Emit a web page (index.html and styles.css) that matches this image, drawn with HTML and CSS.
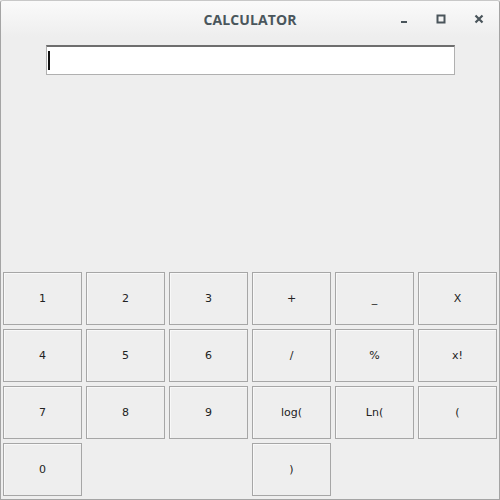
FILE: index.html
```html
<!DOCTYPE html>
<html>
<head>
<meta charset="utf-8">
<link rel="stylesheet" href="styles.css">
</head>
<body>
<div class="window">
  <div class="titlebar">
    <span class="title">CALCULATOR</span>
    <div class="controls">
      <svg class="ctl min" width="12" height="12" viewBox="0 0 12 12"><rect x="3" y="8" width="6" height="2" fill="#4a555b"/></svg>
      <svg class="ctl max" width="12" height="12" viewBox="0 0 12 12"><rect x="2.5" y="2.5" width="7" height="7" fill="none" stroke="#4a555b" stroke-width="2"/></svg>
      <svg class="ctl close" width="12" height="12" viewBox="0 0 12 12"><path d="M2.5 2.5 L9.5 9.5 M9.5 2.5 L2.5 9.5" stroke="#4a555b" stroke-width="2.2"/></svg>
    </div>
  </div>
  <div class="content">
    <div class="field"><span class="caret"></span></div>
    <div class="grid">
      <button class="key">1</button>
      <button class="key">2</button>
      <button class="key">3</button>
      <button class="key">+</button>
      <button class="key">_</button>
      <button class="key">X</button>
      <button class="key">4</button>
      <button class="key">5</button>
      <button class="key">6</button>
      <button class="key">/</button>
      <button class="key">%</button>
      <button class="key">x!</button>
      <button class="key">7</button>
      <button class="key">8</button>
      <button class="key">9</button>
      <button class="key">log(</button>
      <button class="key">Ln(</button>
      <button class="key">(</button>
      <button class="key">0</button>
      <span class="blank"></span>
      <span class="blank"></span>
      <button class="key">)</button>
    </div>
  </div>
</div>
</body>
</html>
```

FILE: styles.css
```css
html, body {
  margin: 0;
  padding: 0;
  background: #eeeeee;
}
.window {
  width: 500px;
  height: 500px;
  box-sizing: border-box;
  border: 1px solid #a4a4a4;
  border-top-color: #c8c8c8;
  border-radius: 3px 3px 0 0;
  background: #eeeeee;
  display: flex;
  flex-direction: column;
  overflow: hidden;
}
.titlebar {
  height: 36px;
  position: relative;
  display: flex;
  align-items: center;
  justify-content: center;
  background: linear-gradient(#fafafa, #eeeeee);
  flex: none;
}
.title {
  font-family: "Open Sans", "DejaVu Sans", sans-serif;
  font-weight: 700;
  font-size: 14px;
  color: #4a565c;
  letter-spacing: 0.1px;
}
.controls {
  position: absolute;
  right: 0;
  top: 0;
  height: 36px;
  display: flex;
  align-items: center;
}
.ctl {
  display: block;
}
.min { margin-right: 25px; }
.max { margin-right: 26px; }
.close { margin-right: 14px; }
.content {
  flex: 1;
  display: flex;
  flex-direction: column;
}
.field {
  margin: 8px 0 0 45px;
  width: 409px;
  height: 30px;
  box-sizing: border-box;
  background: #ffffff;
  border: 1px solid #b0b0b0;
  border-top: 2px solid #6e6e6e;
  display: flex;
  align-items: center;
}
.caret {
  display: block;
  width: 2px;
  height: 19px;
  background: #111;
  margin-left: 1px;
  margin-top: -1px;
}
.grid {
  margin: 197px 0 0 2px;
  display: grid;
  grid-template-columns: repeat(6, 79px);
  grid-template-rows: repeat(4, 53px);
  column-gap: 4px;
  row-gap: 4px;
}
.key {
  margin: 0;
  padding: 0;
  box-sizing: border-box;
  border: 1px solid #a6a6a6;
  background: #eeeeee;
  box-shadow: inset 1px 1px 0 #f8f8f8;
  font-family: "DejaVu Sans", sans-serif;
  font-size: 11px;
  color: #222222;
  display: flex;
  align-items: center;
  justify-content: center;
}
```
